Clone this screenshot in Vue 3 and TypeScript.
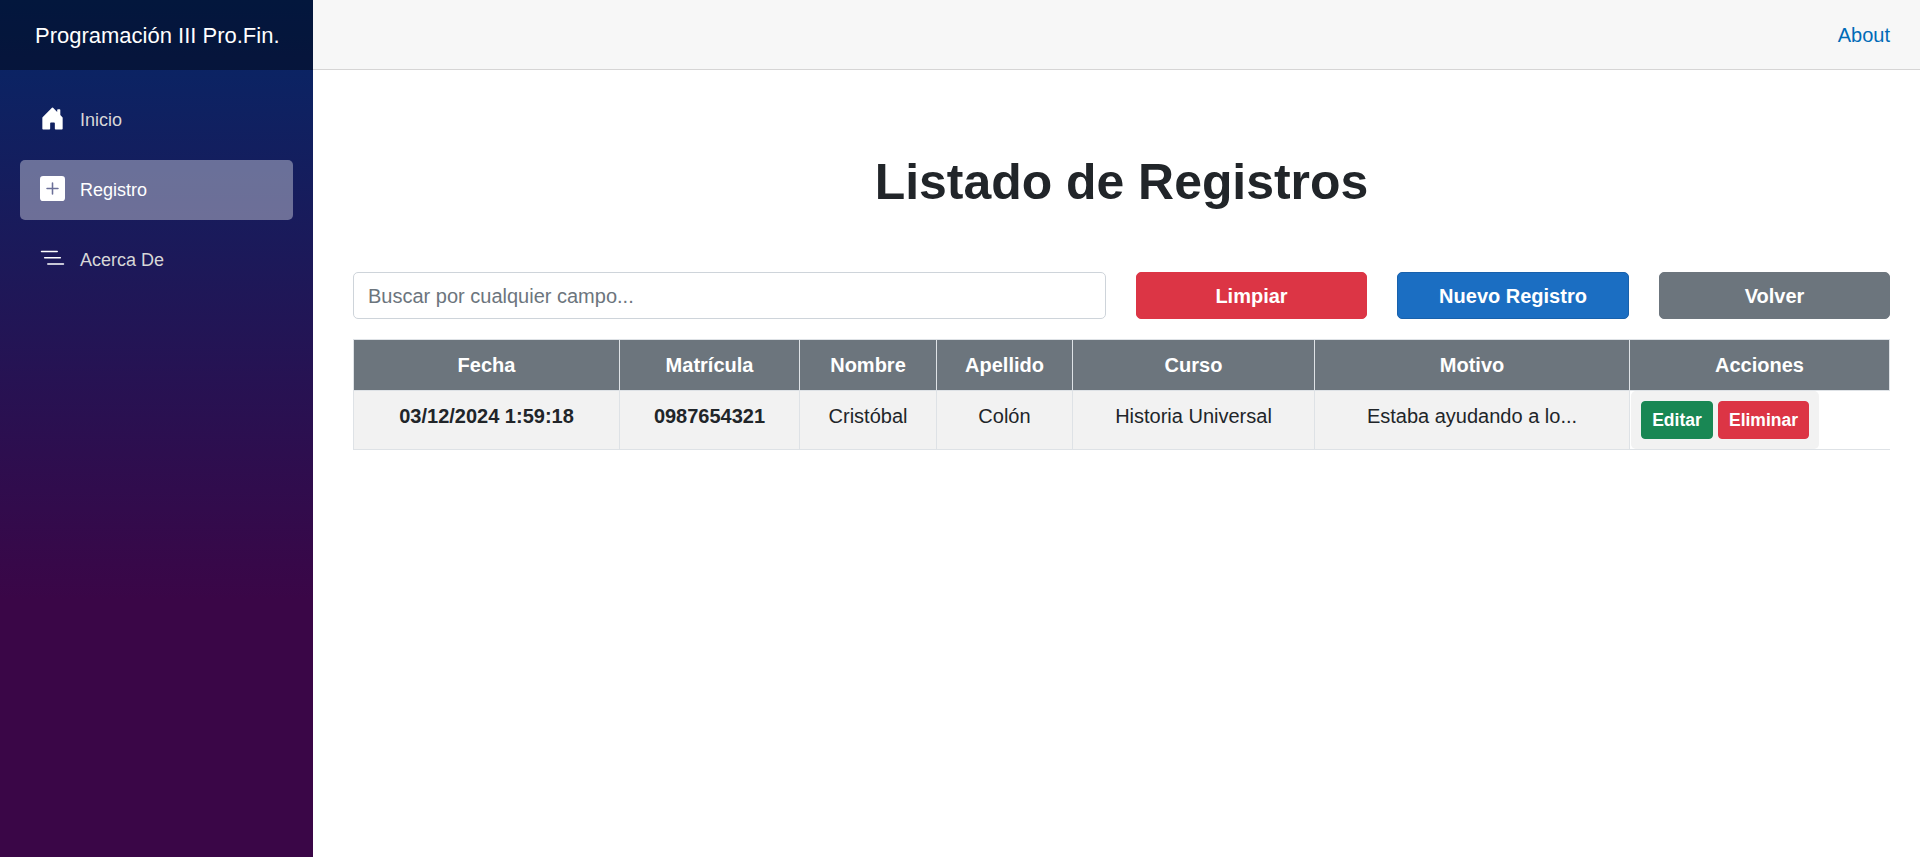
<script setup lang="ts">
import { ref, computed } from 'vue'

interface NavItem { label: string; path: string; active: boolean }
interface Registro {
  fecha: string
  matricula: string
  nombre: string
  apellido: string
  curso: string
  motivo: string
}

const nav: NavItem[] = [
  {
    label: 'Inicio',
    active: false,
    path: 'M6.5 14.5v-3.505c0-.245.25-.495.5-.495h2c.25 0 .5.25.5.5v3.5a.5.5 0 0 0 .5.5h4a.5.5 0 0 0 .5-.5v-7a.5.5 0 0 0-.146-.354L13 5.793V2.5a.5.5 0 0 0-.5-.5h-1a.5.5 0 0 0-.5.5v1.293L8.354 1.146a.5.5 0 0 0-.708 0l-6 6A.5.5 0 0 0 1.5 7.5v7a.5.5 0 0 0 .5.5h4a.5.5 0 0 0 .5-.5Z',
  },
  {
    label: 'Registro',
    active: true,
    path: 'M2 0a2 2 0 0 0-2 2v12a2 2 0 0 0 2 2h12a2 2 0 0 0 2-2V2a2 2 0 0 0-2-2H2zm6.5 4.5v3h3a.5.5 0 0 1 0 1h-3v3a.5.5 0 0 1-1 0v-3h-3a.5.5 0 0 1 0-1h3v-3a.5.5 0 0 1 1 0z',
  },
  {
    label: 'Acerca De',
    active: false,
    path: 'M4.5 11.5A.5.5 0 0 1 5 11h10a.5.5 0 0 1 0 1H5a.5.5 0 0 1-.5-.5zm-2-4A.5.5 0 0 1 3 7h10a.5.5 0 0 1 0 1H3a.5.5 0 0 1-.5-.5zm-2-4A.5.5 0 0 1 1 3h10a.5.5 0 0 1 0 1H1a.5.5 0 0 1-.5-.5z',
  },
]

const search = ref('')
const registros = ref<Registro[]>([
  {
    fecha: '03/12/2024 1:59:18',
    matricula: '0987654321',
    nombre: 'Cristóbal',
    apellido: 'Colón',
    curso: 'Historia Universal',
    motivo: 'Estaba ayudando a lo...',
  },
])

const filtered = computed(() =>
  registros.value.filter((r) =>
    Object.values(r).some((v) => v.toLowerCase().includes(search.value.toLowerCase())),
  ),
)
</script>

<template>
  <div class="page">
    <aside class="sidebar">
      <div class="brand">Programación III Pro.Fin.</div>
      <nav class="nav">
        <a v-for="item in nav" :key="item.label" class="nav-link" :class="{ active: item.active }">
          <svg class="nav-icon" viewBox="0 0 16 16" fill="#fff"><path :d="item.path" /></svg>
          <span>{{ item.label }}</span>
        </a>
      </nav>
    </aside>

    <main class="main">
      <header class="top-row"><a class="about">About</a></header>
      <article class="content">
        <h1 class="title">Listado de Registros</h1>
        <div class="toolbar">
          <input v-model="search" class="search" type="text" placeholder="Buscar por cualquier campo..." />
          <button class="btn danger" @click="search = ''">Limpiar</button>
          <button class="btn primary">Nuevo Registro</button>
          <button class="btn secondary">Volver</button>
        </div>
        <table class="table">
          <colgroup>
            <col class="c-fecha" /><col class="c-matricula" /><col class="c-nombre" />
            <col class="c-apellido" /><col class="c-curso" /><col class="c-motivo" /><col class="c-acciones" />
          </colgroup>
          <thead>
            <tr>
              <th>Fecha</th><th>Matrícula</th><th>Nombre</th><th>Apellido</th>
              <th>Curso</th><th>Motivo</th><th>Acciones</th>
            </tr>
          </thead>
          <tbody>
            <tr v-for="r in filtered" :key="r.matricula">
              <td class="strong">{{ r.fecha }}</td>
              <td class="strong">{{ r.matricula }}</td>
              <td>{{ r.nombre }}</td>
              <td>{{ r.apellido }}</td>
              <td>{{ r.curso }}</td>
              <td>{{ r.motivo }}</td>
              <td class="actions">
                <div class="btn-group">
                  <button class="btn small success">Editar</button>
                  <button class="btn small danger">Eliminar</button>
                </div>
              </td>
            </tr>
          </tbody>
        </table>
      </article>
    </main>
  </div>
</template>

<style>
body {
  margin: 0;
  background: #fff;
}
</style>

<style scoped>
.page,
.page * {
  box-sizing: border-box;
}
.page {
  display: flex;
  height: 100vh;
  overflow: hidden;
  font: 20px/30px "Liberation Sans", Arial, sans-serif;
  color: #212529;
}
.sidebar {
  flex: 0 0 313px;
  background: linear-gradient(180deg, rgb(5, 39, 103) 0%, #3a0647 70%);
}
.brand {
  height: 70px;
  padding-left: 35px;
  line-height: 72px;
  font-size: 22px;
  color: #fff;
  white-space: nowrap;
  background: rgba(0, 0, 0, 0.4);
}
.nav {
  display: flex;
  flex-direction: column;
  gap: 10px;
  padding: 20px 20px 0;
}
.nav-link {
  display: flex;
  align-items: center;
  height: 60px;
  padding-left: 20px;
  border-radius: 5px;
  font-size: 18px;
  color: #d7d7d7;
}
.nav-link.active {
  color: #fff;
  background: rgba(255, 255, 255, 0.37);
}
.nav-icon {
  width: 25px;
  height: 25px;
  margin: 0 15px 3px 0;
}
.main {
  flex: 1;
  min-width: 0;
}
.top-row {
  display: flex;
  align-items: center;
  justify-content: flex-end;
  height: 70px;
  padding-right: 30px;
  background: #f7f7f7;
  border-bottom: 1px solid #d6d5d5;
}
.about {
  color: #006bb7;
}
.content {
  padding: 82px 30px 0 40px;
}
.title {
  margin: 0 0 60px;
  font-size: 49.9px;
  line-height: 60px;
  font-weight: 700;
  text-align: center;
}
.toolbar {
  display: grid;
  grid-template-columns: 753px 231px 232px 231px;
  gap: 30px;
  height: 47px;
}
.search {
  min-width: 0;
  padding: 0 14px;
  border: 1px solid #ced4da;
  border-radius: 5px;
  font: inherit;
  color: #212529;
  background: #fff;
}
.search::placeholder {
  color: #6c757d;
  opacity: 1;
}
.btn {
  padding: 0;
  border: 1px solid transparent;
  border-radius: 5px;
  font: inherit;
  font-weight: 700;
  color: #fff;
}
.danger {
  background: #dc3545;
  border-color: #dc3545;
}
.primary {
  background: #1b6ec2;
  border-color: #1861ac;
}
.secondary {
  background: #6c757d;
  border-color: #6c757d;
}
.success {
  background: #198754;
  border-color: #198754;
}
.table {
  width: 1537px;
  margin-top: 20px;
  table-layout: fixed;
  border-collapse: collapse;
}
.c-fecha { width: 266px; }
.c-matricula { width: 180px; }
.c-nombre { width: 137px; }
.c-apellido { width: 136px; }
.c-curso { width: 242px; }
.c-motivo { width: 315px; }
.c-acciones { width: 260px; }
.table th,
.table td {
  padding: 10px;
  border: 1px solid #dee2e6;
  text-align: center;
  vertical-align: top;
}
.table th {
  color: #fff;
  background: #6c757d;
}
.table td {
  background: #f2f2f2;
}
.table .strong {
  font-weight: 700;
}
.table .actions {
  padding: 0 0 0 1px;
  border-right-color: transparent;
  background: #fff;
}
.btn-group {
  display: flex;
  gap: 5px;
  width: 188px;
  height: 58px;
  padding: 10px;
  border-radius: 5px;
  background: #f2f2f2;
}
.small {
  height: 38px;
  font-size: 17.5px;
  line-height: 26px;
  border-radius: 4px;
}
.small.success {
  width: 72px;
}
.small.danger {
  width: 91px;
}
</style>
